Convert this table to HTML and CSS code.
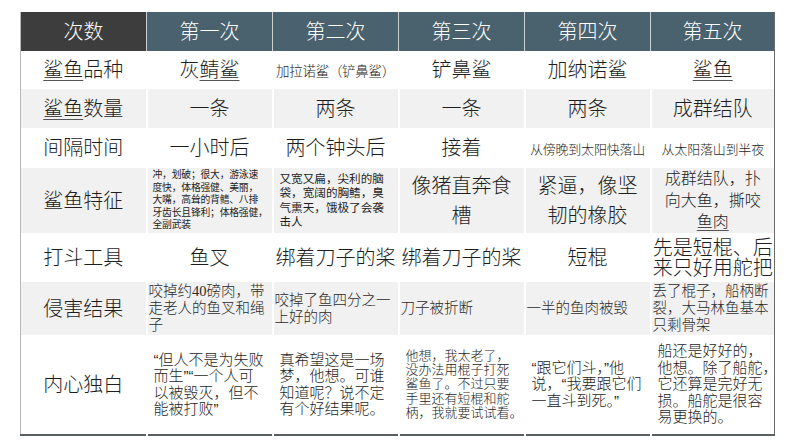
FILE: index.html
```html
<!DOCTYPE html>
<html lang="zh-CN">
<head>
<meta charset="utf-8">
<link rel="stylesheet" href="styles.css">
</head>
<body>
<table class="grid">
  <colgroup>
    <col class="c"><col class="c"><col class="c"><col class="c"><col class="c"><col class="c-last">
  </colgroup>
  <tr class="head">
    <th class="corner">次数</th><th>第一次</th><th>第二次</th><th>第三次</th><th>第四次</th><th>第五次</th>
  </tr>
  <tr class="r1 white">
    <td class="lab"><span class="u">鲨鱼</span>品种</td>
    <td class="big">灰<span class="u">鲭鲨</span></td>
    <td class="tiny">加拉诺鲨（铲鼻鲨）</td>
    <td class="big">铲鼻鲨</td>
    <td class="big">加纳诺鲨</td>
    <td class="big"><span class="u">鲨鱼</span></td>
  </tr>
  <tr class="r2 gray">
    <td class="lab"><span class="u">鲨鱼</span>数量</td>
    <td class="big">一条</td>
    <td class="big">两条</td>
    <td class="big">一条</td>
    <td class="big">两条</td>
    <td class="big">成群结队</td>
  </tr>
  <tr class="r3 white">
    <td class="lab">间隔时间</td>
    <td class="big">一小时后</td>
    <td class="big">两个钟头后</td>
    <td class="big">接着</td>
    <td class="small">从傍晚到太阳快落山</td>
    <td class="small">从太阳落山到半夜</td>
  </tr>
  <tr class="r4 gray">
    <td class="lab">鲨鱼特征</td>
    <td class="micro left">冲，划破；很大，游泳速<br>度快，体格强健、美丽，<br>大嘴，高耸的背鳍、八排<br>牙齿长且锋利；体格强健，<br>全副武装</td>
    <td class="mini left">又宽又扁，尖利的脑<br>袋，宽阔的胸鳍，臭<br>气熏天，饿极了会袭<br>击人</td>
    <td class="big tall">像猪直奔食<br>槽</td>
    <td class="big tall">紧逼，像坚<br>韧的橡胶</td>
    <td class="mid">成群结队，扑<br>向大鱼，撕咬<br><span class="u">鱼肉</span></td>
  </tr>
  <tr class="r5 white">
    <td class="lab">打斗工具</td>
    <td class="big">鱼叉</td>
    <td class="big">绑着刀子的桨</td>
    <td class="big">绑着刀子的桨</td>
    <td class="big">短棍</td>
    <td class="big two">先是短棍、后<br>来只好用舵把</td>
  </tr>
  <tr class="r6 gray">
    <td class="lab">侵害结果</td>
    <td class="serif left">咬掉约40磅肉，带<br>走老人的鱼叉和绳<br>子</td>
    <td class="serif left">咬掉了鱼四分之一<br>上好的肉</td>
    <td class="serif left">刀子被折断</td>
    <td class="serif left">一半的鱼肉被毁</td>
    <td class="serif left">丢了棍子，船柄断<br>裂，大马林鱼基本<br>只剩骨架</td>
  </tr>
  <tr class="r7 white">
    <td class="lab">内心独白</td>
    <td class="mono left">“但人不是为失败<br>而生”“一个人可<br>以被毁灭，但不<br>能被打败”</td>
    <td class="mono left">真希望这是一场<br>梦，他想。可谁<br>知道呢？说不定<br>有个好结果呢。</td>
    <td class="mono left sm">他想，我太老了，<br>没办法用棍子打死<br>鲨鱼了。不过只要<br>手里还有短棍和舵<br>柄，我就要试试看。</td>
    <td class="mono left">“跟它们斗，”他<br>说，“我要跟它们<br>一直斗到死。”</td>
    <td class="mono left">船还是好好的，<br>他想。除了船舵，<br>它还算是完好无<br>损。船舵是很容<br>易更换的。</td>
  </tr>
</table>
</body>
</html>
```

FILE: styles.css
```css
html, body {
  margin: 0;
  padding: 0;
  background: #ffffff;
}
body {
  padding: 12px 0 0 20px;
  font-family: "Liberation Sans", "Noto Sans CJK SC", sans-serif;
  font-weight: 300;
  color: #1e1e1e;
}
.grid {
  border-collapse: collapse;
  table-layout: fixed;
  width: 754px;
  border-left: 1px solid #b8b8b8;
  border-right: 1px solid #6a6a6a;
  border-bottom: 2px solid #5a5f62;
}
.c { width: 126px; }
.c-last { width: 124px; }
th, td {
  padding: 0;
  text-align: center;
  vertical-align: middle;
  overflow: visible;
  white-space: nowrap;
}
td { border-left: 2px solid #ffffff; }
td:first-child { border-left: none; }
.head th {
  height: 39px;
  background: #4a626e;
  color: #ffffff;
  font-weight: 300;
  font-size: 20px;
  line-height: 22px;
  border-left: 1px solid #c9d1d5;
}
.head th.corner {
  background: #3d3d3d;
  border-left: none;
}
.white { background: #ffffff; }
.gray { background: #f1f1f1; }
.r1 td { height: 38px; }
.r2 td { height: 39px; }
.r3 td { height: 40px; }
.r4 td { height: 65px; }
.r5 td { height: 49px; }
.r6 td { height: 53px; }
.r7 td { height: 99px; }
.lab {
  font-size: 20px;
  line-height: 24px;
}
.big {
  font-size: 20px;
  line-height: 24px;
}
.tall { line-height: 30px; }
.two { line-height: 20px; }
.tiny {
  font-size: 13.5px;
  letter-spacing: -0.3px;
}
.small {
  font-size: 13px;
  letter-spacing: -0.2px;
}
.left {
  text-align: left;
  padding-left: 5px;
}
.micro {
  font-size: 9.8px;
  line-height: 12.5px;
  letter-spacing: -0.2px;
  font-weight: 400;
}
.mini {
  font-size: 11.6px;
  line-height: 14.5px;
  padding-left: 6px;
  font-weight: 400;
}
.mid {
  font-size: 16px;
  line-height: 21.5px;
}
.serif {
  font-family: "Liberation Serif", "Noto Sans CJK SC", serif;
  font-size: 14.5px;
  line-height: 17px;
  color: #2a2a2a;
  padding-left: 1px;
}
.mono {
  font-size: 15px;
  line-height: 16.5px;
  padding-left: 6px;
}
.mono.sm {
  font-size: 13px;
  line-height: 14.2px;
}
.u {
  text-decoration: underline;
  text-decoration-color: #555555;
  text-decoration-thickness: 1px;
  text-underline-offset: 3px;
}
```
